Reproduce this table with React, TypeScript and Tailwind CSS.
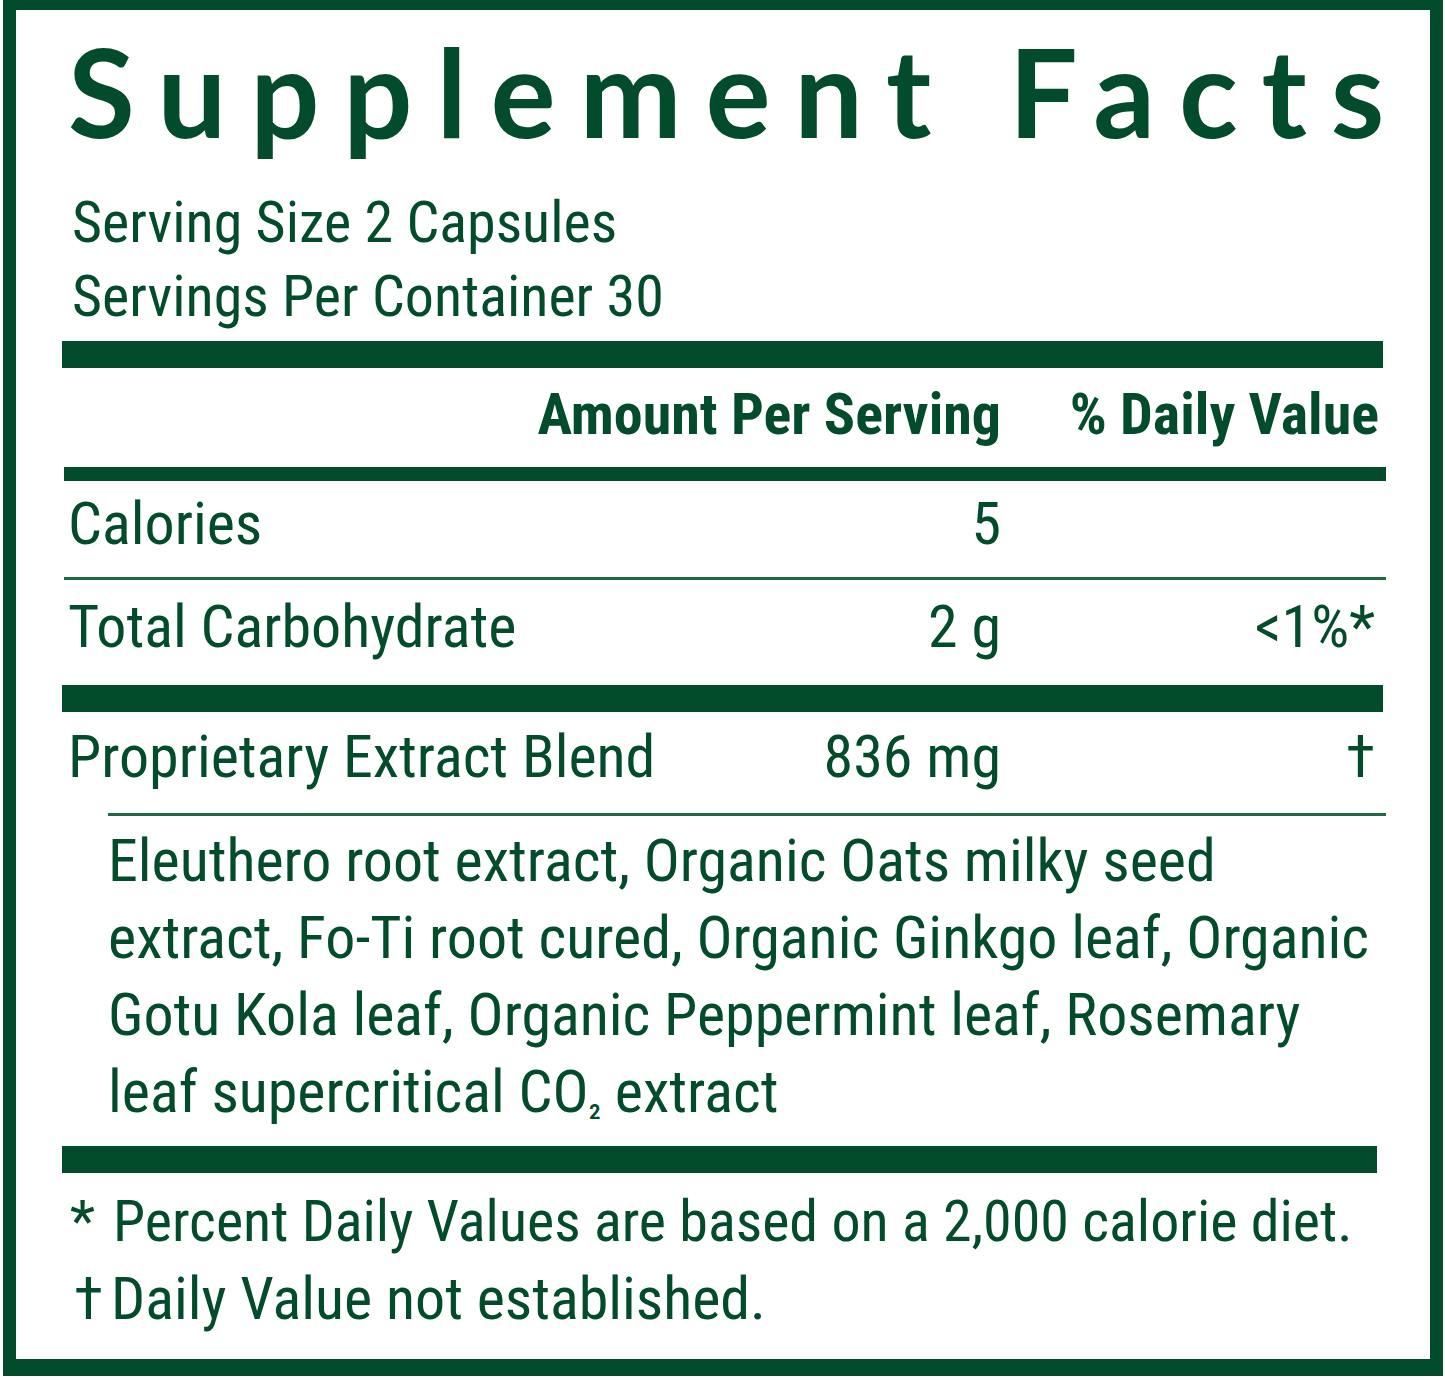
const body = { fontFamily: '"Roboto Condensed", "DejaVu Sans Condensed", sans-serif' };

function Bar({ h, className = "" }: { h: string; className?: string }) {
  return <div className={`${h} bg-[#024b2b] ${className}`} />;
}

function Row({
  label,
  amount,
  dv,
  height,
}: {
  label: string;
  amount: string;
  dv?: string;
  height: string;
}) {
  return (
    <div className={`flex items-center ${height} pb-[11px] text-[60px] leading-none whitespace-nowrap`}>
      <div className="flex-1 pl-[6px]">{label}</div>
      <div className="w-[300px] text-right pr-[2px]">{amount}</div>
      <div className="w-[380px] text-right pr-[8px]">{dv}</div>
    </div>
  );
}

export default function App() {
  return (
    <div className="w-[1445px] h-[1380px] bg-white">
      <div
        className="ml-[3px] w-[1440px] h-[1376px] border-[#024b2b] border-x-[13px] border-t-[10px] border-b-[17px] text-[#024b2b] pl-[46px] pr-[47px]"
        style={body}
      >
        <h1
          className="h-[175px] pt-[20px] pl-[6px] text-[122px] leading-none font-bold tracking-[0.195em] whitespace-nowrap"
          style={{ fontFamily: "Lato, 'Open Sans', sans-serif" }}
        >
          Supplement Facts
        </h1>
        <div className="pl-[10px] text-[58px] leading-[74px] h-[156px] whitespace-nowrap">
          <div>Serving Size 2 Capsules</div>
          <div>Servings Per Container 30</div>
        </div>
        <Bar h="h-[27px]" />
        <div className="flex items-center h-[99px] pb-[8px] text-[58px] leading-none font-bold whitespace-nowrap">
          <div className="flex-1" />
          <div className="text-right pr-[2px]">Amount Per Serving</div>
          <div className="w-[380px] text-right pr-[4px]">% Daily Value</div>
        </div>
        <Bar h="h-[14px]" className="ml-[2px] -mr-[3px]" />
        <Row label="Calories" amount="5" height="h-[96px]" />
        <div className="h-[3px] bg-[#1d6a45] ml-[2px] -mr-[3px]" />
        <Row label="Total Carbohydrate" amount="2 g" dv="<1%*" height="h-[105px]" />
        <Bar h="h-[27px]" />
        <Row label="Proprietary Extract Blend" amount="836 mg" dv="†" height="h-[101px]" />
        <div className="h-[3px] bg-[#1d6a45] ml-[46px] -mr-[3px]" />
        <p className="h-[330px] pl-[46px] pt-[6px] text-[60px] leading-[77px] whitespace-nowrap">
          Eleuthero root extract, Organic Oats milky seed
          <br />
          extract, Fo-Ti root cured, Organic Ginkgo leaf, Organic
          <br />
          Gotu Kola leaf, Organic Peppermint leaf, Rosemary
          <br />
          leaf supercritical CO<span className="text-[38px]">₂</span> extract
        </p>
        <Bar h="h-[27px]" className="mr-[6px]" />
        <div className="pl-[6px] pt-[10px] leading-[77px] whitespace-nowrap">
          <div className="flex text-[58px]">
            <span className="w-[45px] pl-[2px]">*</span>
            <span>Percent Daily Values are based on a 2,000 calorie diet.</span>
          </div>
          <div className="flex text-[60px]">
            <span className="w-[43px] pl-[6px]">†</span>
            <span>Daily Value not established.</span>
          </div>
        </div>
      </div>
    </div>
  );
}
